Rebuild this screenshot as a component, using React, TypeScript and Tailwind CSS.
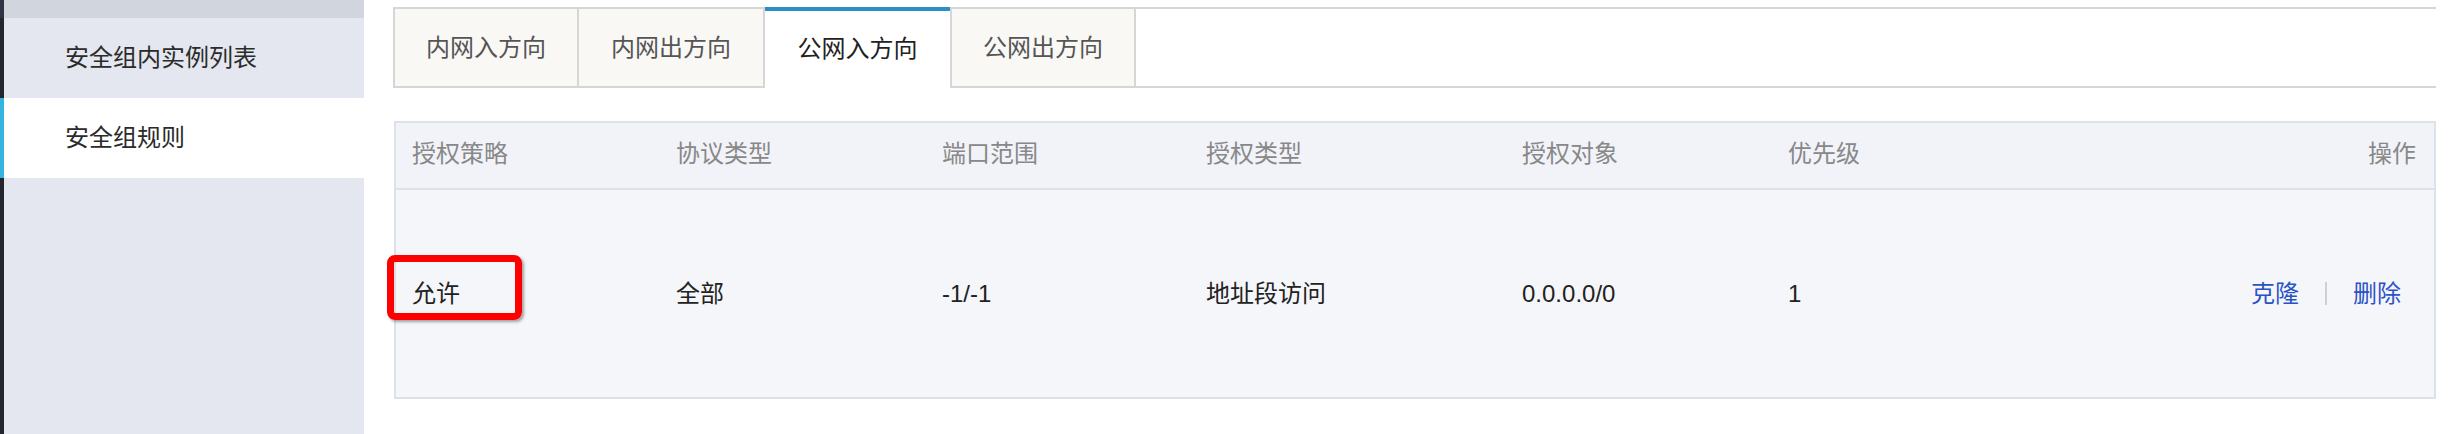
const tabs = ['内网入方向', '内网出方向', '公网入方向', '公网出方向'];
const activeTab = 2;

const columns = ['授权策略', '协议类型', '端口范围', '授权类型', '授权对象', '优先级'];
const rule = ['允许', '全部', '-1/-1', '地址段访问', '0.0.0.0/0', '1'];

const Sidebar = () => (
    <aside className="flex h-full w-[364px] shrink-0 flex-col bg-[#e4e7ef]">
        <div className="h-[18px] border-l-4 border-[#2f3346] bg-[#d1d5de]" />
        <div className="flex h-[80px] items-center border-l-4 border-[#24262e] pl-[61px] text-[#2b2b2b]">
            安全组内实例列表
        </div>
        <div className="flex h-[80px] items-center border-l-4 border-[#35b4df] bg-white pl-[61px] text-[#2b2b2b]">
            安全组规则
        </div>
        <div className="flex-1 border-l-4 border-[#24262e]" />
    </aside>
);

const Tabs = () => (
    <div className="flex h-[81px]">
        {tabs.map((tab, i) =>
            i === activeTab ? (
                <div
                    key={tab}
                    className="flex w-[185px] items-center justify-center border-t-4 border-[#2b8fc4] bg-white pb-[2px] text-[#222]"
                >
                    {tab}
                </div>
            ) : (
                <div
                    key={tab}
                    className={`flex w-[186px] items-center justify-center border-y-2 border-r-2 border-[#d6d6d6] bg-[#f9f8f5] text-[#555] ${
                        i === 0 ? 'border-l-2' : ''
                    } ${i === activeTab + 1 ? 'border-l-2' : ''}`}
                >
                    {tab}
                </div>
            )
        )}
        <div className="flex-1 border-y-2 border-[#d6d6d6]" />
    </div>
);

const RulesTable = () => (
    <div className="ml-px border-2 border-[#dde1e8]">
        <div className="grid h-[67px] grid-cols-[264px_266px_264px_316px_266px_1fr_auto] items-center border-b-2 border-[#dde1e8] bg-[#f1f3f8] pb-[4px] text-[#888]">
            {columns.map((col) => (
                <div key={col} className="pl-4">
                    {col}
                </div>
            ))}
            <div className="pr-[18px] text-right">操作</div>
        </div>
        <div className="relative grid h-[207px] grid-cols-[264px_266px_264px_316px_266px_1fr_auto] items-center bg-[#f5f6f9] text-[#222]">
            {rule.map((value, i) => (
                <div key={i} className="pl-4">
                    {value}
                </div>
            ))}
            <div className="flex items-center pr-[33px] text-[#2a52c6]">
                <span>克隆</span>
                <span className="mx-[26px] h-[23px] w-[2px] bg-[#cfcfcf]" />
                <span>删除</span>
            </div>
            <div className="absolute left-[-9px] top-[65px] h-[65px] w-[135px] rounded-[8px] border-[7px] border-[#ff0000] shadow-[2px_2px_3px_rgba(0,0,0,0.35)]" />
        </div>
    </div>
);

export default function App() {
    return (
        <div className="flex h-[434px] w-[2448px] bg-white font-['Liberation_Sans','Noto_Sans_CJK_SC',sans-serif] text-[24px] leading-none">
            <Sidebar />
            <main className="flex flex-1 flex-col gap-[33px] pl-[29px] pr-[12px] pt-[7px]">
                <Tabs />
                <RulesTable />
            </main>
        </div>
    );
}
